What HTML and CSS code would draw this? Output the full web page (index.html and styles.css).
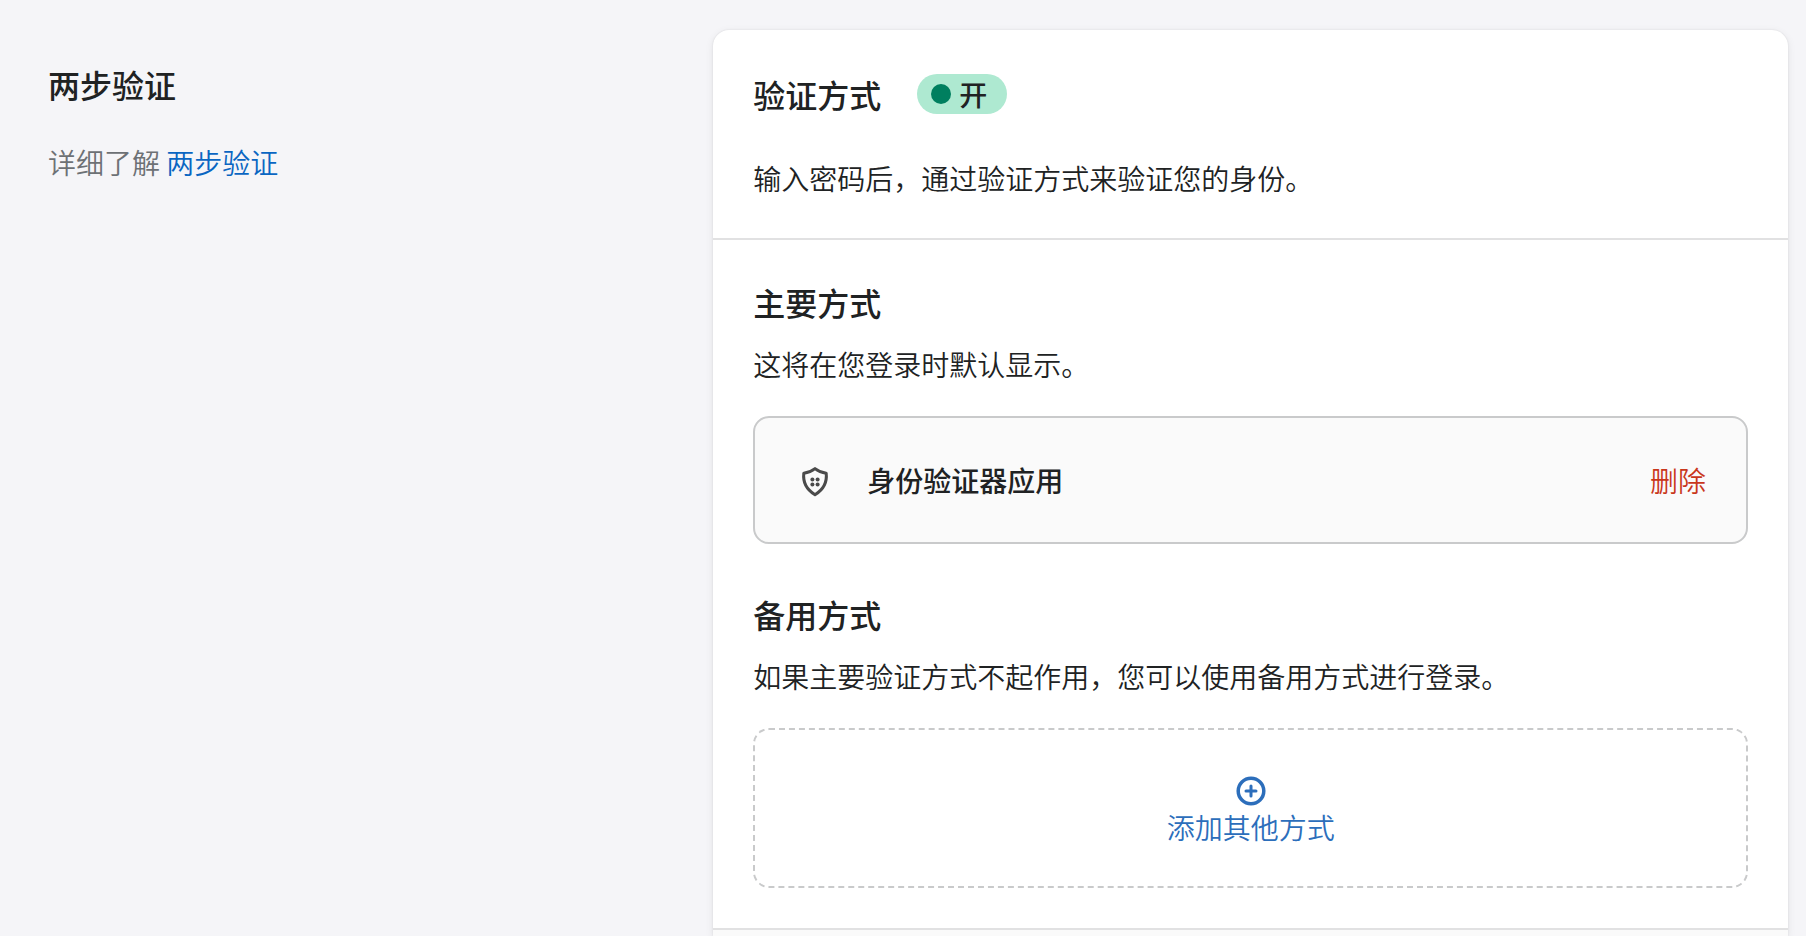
FILE: index.html
```
<!DOCTYPE html>
<html lang="zh-CN">
<head>
  <meta charset="UTF-8" />
  <meta name="viewport" content="width=device-width, initial-scale=1.0"/>
  <title>两步验证</title>
  <link rel="stylesheet" href="styles.css">
</head>
<body>

  <main class="layout">
    <aside class="annotation">
      <h1>两步验证</h1>
      <p>详细了解 <a href="#">两步验证</a></p>
    </aside>

    <div class="card">
      <section class="card-header">
        <div class="title-row">
          <h2>验证方式</h2>
          <span class="badge"><span class="dot"></span>开</span>
        </div>
        <p>输入密码后，通过验证方式来验证您的身份。</p>
      </section>

      <section class="methods">
        <div class="method">
          <h2>主要方式</h2>
          <p>这将在您登录时默认显示。</p>
          <div class="method-box">
            <svg class="shield" viewBox="0 0 40 40" aria-hidden="true">
              <path d="M20 8.6 C17 11 13 12.6 8.8 13.2 C7.8 21.8 11.9 29.8 20 34.8 C28.1 29.8 32.2 21.8 31.2 13.2 C27 12.6 23 11 20 8.6 Z"/>
              <circle cx="17.4" cy="19.4" r="2"/>
              <circle cx="22.6" cy="19.4" r="2"/>
              <circle cx="17.4" cy="24.4" r="2"/>
              <circle cx="22.6" cy="24.4" r="2"/>
            </svg>
            <strong>身份验证器应用</strong>
            <button type="button" class="delete">删除</button>
          </div>
        </div>

        <div class="method">
          <h2>备用方式</h2>
          <p>如果主要验证方式不起作用，您可以使用备用方式进行登录。</p>
          <button type="button" class="add-box">
            <svg viewBox="0 0 32 32" aria-hidden="true">
              <circle cx="16" cy="16" r="12.8"/>
              <path d="M16 11v10M11 16h10"/>
            </svg>
            添加其他方式
          </button>
        </div>
      </section>

      <section class="card-footer"></section>
    </div>
  </main>

</body>
</html>
```
FILE: styles.css
```
* {
  box-sizing: border-box;
}

body {
  margin: 0;
  font-family: "Noto Sans CJK SC", sans-serif;
  font-size: 28px;
  font-weight: 350;
  line-height: 40px;
  color: #202223;
  background: #f5f5f8;
}

h1, h2, p {
  margin: 0;
}

h1, h2 {
  font-size: 32px;
  line-height: 40px;
  font-weight: 500;
}

button {
  font: inherit;
  padding: 0;
  border: none;
  background: none;
  cursor: pointer;
}

.layout {
  display: grid;
  grid-template-columns: 11fr 17fr;
  min-height: 100vh;
  padding: 30px 18px 0;
}

.annotation {
  padding: 34px 30px;
  color: #6d7175;
}

.annotation h1 {
  margin-bottom: 38px;
  color: #202223;
}

.annotation a {
  color: #0a66c2;
  text-decoration: none;
}

.card {
  display: flex;
  flex-direction: column;
  background: #fff;
  border-radius: 16px 16px 0 0;
  box-shadow: 0 2px 8px rgba(23, 24, 24, 0.08), 0 0 2px rgba(0, 0, 0, 0.1);
}

.card-header {
  padding: 44px 40px 40px;
}

.title-row {
  display: flex;
  align-items: center;
  gap: 36px;
  margin-bottom: 44px;
}

.badge {
  display: flex;
  align-items: center;
  gap: 8px;
  height: 40px;
  padding: 0 20px 0 14px;
  border-radius: 20px;
  font-weight: 500;
  background: #aee9d1;
}

.dot {
  width: 20px;
  height: 20px;
  border-radius: 50%;
  background: #007f5f;
}

.methods {
  display: grid;
  gap: 50px;
  padding: 42px 40px 40px;
  border-top: 2px solid #e1e1e2;
}

.method h2 {
  margin-bottom: 22px;
}

.method p {
  margin-bottom: 32px;
}

.method-box {
  display: flex;
  align-items: center;
  gap: 32px;
  height: 128px;
  padding: 0 40px;
  border: 2px solid #c9cacb;
  border-radius: 16px;
  background: #fafafa;
}

.method-box strong {
  font-weight: 500;
}

.shield {
  width: 40px;
  height: 40px;
  fill: #4a4a4a;
}

.shield path {
  fill: none;
  stroke: #4a4a4a;
  stroke-width: 3;
  stroke-linejoin: round;
}

.delete {
  margin-left: auto;
  color: #c9371c;
}

.add-box {
  display: flex;
  flex-direction: column;
  align-items: center;
  justify-content: center;
  width: 100%;
  height: 160px;
  padding-top: 6px;
  border: 2px dashed #c9cacb;
  border-radius: 16px;
  color: #2c6ebb;
}

.add-box svg {
  width: 32px;
  height: 32px;
  fill: none;
  stroke: #2c6ebb;
  stroke-width: 3.5;
  stroke-linecap: round;
}

.add-box path {
  stroke-width: 3;
}

.card-footer {
  flex: 1;
  border-top: 2px solid #e1e1e2;
  background: #fafafa;
}
```
